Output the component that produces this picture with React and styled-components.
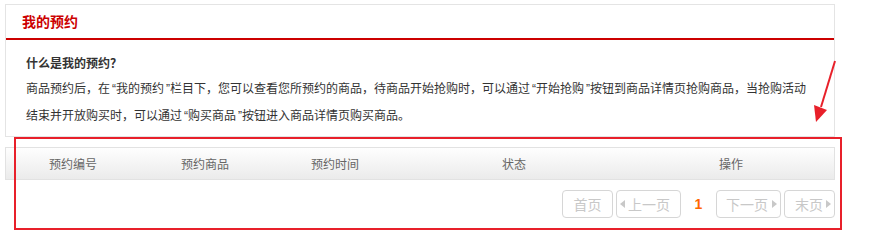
import React from "react";
import styled, { createGlobalStyle, css } from "styled-components";

const GlobalStyle = createGlobalStyle`
  html, body {
    margin: 0;
    padding: 0;
    background: #fff;
  }
  body {
    font-family: "Noto Sans CJK SC", "Liberation Sans", sans-serif;
    font-size: 12px;
    color: #333;
  }
`;

const Page = styled.div`
  position: relative;
  box-sizing: border-box;
  width: 835px;
  min-height: 245px;
  padding: 4px 0 0 5px;
`;

const Panel = styled.div`
  border: 1px solid #e4e4e4;
`;

const PanelTitle = styled.h2`
  margin: 0;
  height: 33px;
  line-height: 33px;
  padding-left: 16px;
  font-size: 14px;
  font-weight: bold;
  color: #c00;
  border-bottom: 2px solid #c00;
`;

const PanelBody = styled.div`
  padding: 11px 20px 7px;
`;

const Question = styled.h3`
  margin: 0;
  font-size: 12px;
  line-height: 24px;
  font-weight: bold;
  color: #333;
`;

const Desc = styled.p`
  margin: 0;
  font-size: 12px;
  line-height: 26px;
  color: #333;
`;

/* SimSun-style half-width quotes: 6px each, glyph on the right */
const Quote = styled.span`
  margin-left: 2px;
  font-family: "Liberation Sans", Arial, sans-serif;
`;

const TableHead = styled.div`
  margin-top: 10px;
  display: grid;
  grid-template-columns: 134px 130px 130px 228px 1fr;
  height: 31px;
  border: 1px solid #e2e2e2;
  background: linear-gradient(#fefefe, #ebebeb);
`;

const HeadCell = styled.div`
  text-align: center;
  line-height: 31px;
  font-size: 12px;
  color: #666;
`;

const Pager = styled.div`
  margin-top: 10px;
  display: flex;
  justify-content: flex-end;
  align-items: center;
  gap: 3px;
`;

const PageButton = styled.span`
  box-sizing: border-box;
  width: ${(p) => p.$w}px;
  height: 28px;
  display: inline-flex;
  align-items: center;
  justify-content: ${(p) => p.$justify || "space-between"};
  padding: ${(p) => p.$pad || "0"};
  border: 1px solid #d6d6d6;
  border-radius: 4px;
  font-size: 14px;
  color: #c8c8c8;
  white-space: nowrap;
`;

const Triangle = styled.i`
  width: 0;
  height: 0;
  border-top: 4px solid transparent;
  border-bottom: 4px solid transparent;
  ${(p) =>
    p.$dir === "left"
      ? css`border-right: 5px solid #c8c8c8;`
      : css`border-left: 5px solid #c8c8c8;`}
`;

const CurrentPage = styled.span`
  width: 29px;
  text-align: center;
  font-family: "Liberation Sans", Arial, sans-serif;
  font-weight: bold;
  font-size: 14px;
  color: #f60;
`;

const Annotation = styled.div`
  position: absolute;
  left: 14px;
  top: 137px;
  width: 828px;
  height: 93px;
  box-sizing: border-box;
  border: 2px solid #e8202a;
  pointer-events: none;
`;

const ArrowMark = styled.svg`
  position: absolute;
  left: 805px;
  top: 55px;
  width: 40px;
  height: 72px;
  pointer-events: none;
`;

const columns = ["预约编号", "预约商品", "预约时间", "状态", "操作"];

const Q = ({ children }) => <Quote>{children}</Quote>;

export default function App() {
  return (
    <>
      <GlobalStyle />
      <Page>
        <Panel>
          <PanelTitle>我的预约</PanelTitle>
          <PanelBody>
            <Question>什么是我的预约？</Question>
            <Desc>
              商品预约后，在<Q>“</Q>我的预约<Q>”</Q>栏目下，您可以查看您所预约的商品，待商品开始抢购时，可以通过<Q>“</Q>开始抢购<Q>”</Q>按钮到商品详情页抢购商品，当抢购活动结束并开放购买时，可以通过<Q>“</Q>购买商品<Q>”</Q>按钮进入商品详情页购买商品。
            </Desc>
          </PanelBody>
        </Panel>

        <TableHead>
          {columns.map((c) => (
            <HeadCell key={c}>{c}</HeadCell>
          ))}
        </TableHead>

        <Pager>
          <PageButton $w={51} $justify="center">首页</PageButton>
          <PageButton $w={65} $pad="0 10px 0 3px">
            <Triangle $dir="left" />
            上一页
          </PageButton>
          <CurrentPage>1</CurrentPage>
          <PageButton $w={65} $pad="0 3px 0 9px">
            下一页
            <Triangle $dir="right" />
          </PageButton>
          <PageButton $w={51} $pad="0 3px 0 10px">
            末页
            <Triangle $dir="right" />
          </PageButton>
        </Pager>

        <Annotation />
        <ArrowMark viewBox="0 0 40 72">
          <line x1="30" y1="6" x2="16" y2="52" stroke="#e8202a" strokeWidth="2" />
          <polygon points="11,67 9,50 22,55" fill="#e8202a" />
        </ArrowMark>
      </Page>
    </>
  );
}
